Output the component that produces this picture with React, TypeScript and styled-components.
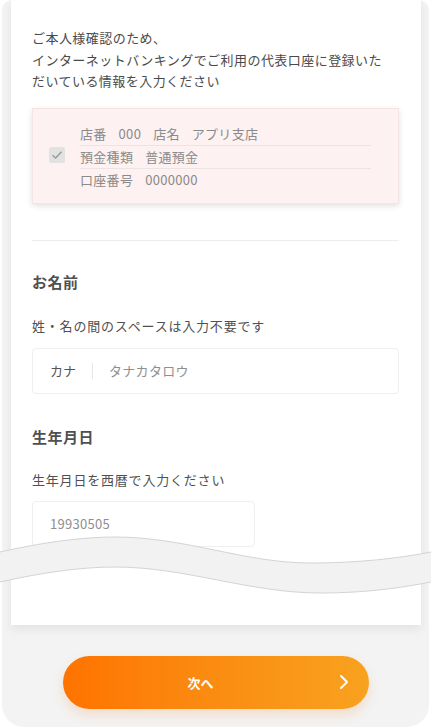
import styled, { createGlobalStyle } from "styled-components"

const GlobalStyle = createGlobalStyle`
  html, body {
    margin: 0;
    padding: 0;
    background: #ffffff;
  }
  body {
    font-family: "Noto Sans CJK JP", "Noto Sans", sans-serif;
    color: #555;
  }
`

const Frame = styled.div`
  position: relative;
  margin: 0 2px;
  height: 727px;
  background: #f3f3f3;
  border-radius: 10px 10px 22px 22px;
  display: flex;
  flex-direction: column;
  align-items: flex-start;
`

const Card = styled.div`
  position: relative;
  margin-left: 9px;
  width: 410px;
  height: 625px;
  box-sizing: border-box;
  padding: 27px 22px 0 21px;
  background: #fff;
  box-shadow: 0 4px 10px rgba(0, 0, 0, 0.07);
  display: flex;
  flex-direction: column;
`

const Intro = styled.p`
  margin: 0;
  font-size: 13px;
  line-height: 21.5px;
  letter-spacing: 0.45px;
  color: #4a4a4a;
`

const InfoBox = styled.div`
  margin-top: 16px;
  height: 96px;
  box-sizing: border-box;
  padding: 14px 27px 0 16px;
  background: #fdf1f1;
  border: 1px solid #f6e4e4;
  box-shadow: 0 2px 6px rgba(0, 0, 0, 0.12);
  display: flex;
  align-items: flex-start;
  gap: 15px;
`

const Check = styled.div`
  margin-top: 24px;
  width: 16px;
  height: 16px;
  border-radius: 2px;
  background: #e2e2e2;
  display: flex;
  align-items: center;
  justify-content: center;
  flex-shrink: 0;
`

const Rows = styled.div`
  flex: 1;
  display: flex;
  flex-direction: column;
`

const InfoRow = styled.div<{ $line?: boolean }>`
  height: 23px;
  box-sizing: border-box;
  display: flex;
  align-items: center;
  gap: 12px;
  font-size: 13px;
  color: #8a8a8a;
  border-bottom: 1px solid ${(p) => (p.$line ? "#ece3e3" : "transparent")};
  letter-spacing: 0.3px;
`

const Divider = styled.div`
  margin-top: 36px;
  height: 1px;
  background: #ededed;
`

const Heading = styled.h2<{ $top: number }>`
  margin: ${(p) => p.$top}px 0 0;
  font-size: 15px;
  line-height: 22px;
  font-weight: 700;
  letter-spacing: 0.5px;
  color: #505050;
`

const Hint = styled.p<{ $top: number }>`
  margin: ${(p) => p.$top}px 0 0;
  font-size: 13px;
  line-height: 20px;
  letter-spacing: 0.8px;
  color: #505050;
`

const Field = styled.div<{ $width: number; $top: number }>`
  margin-top: ${(p) => p.$top}px;
  width: ${(p) => p.$width}px;
  height: 46px;
  box-sizing: border-box;
  border: 1px solid #efefef;
  border-radius: 4px;
  display: flex;
  align-items: center;
  padding-left: 17px;
  font-size: 13px;
  flex-shrink: 0;
`

const FieldLabel = styled.span`
  color: #555;
  padding-right: 16px;
  border-right: 1px solid #e6e6e6;
  line-height: 16px;
`

const FieldValue = styled.span<{ $pad?: number }>`
  color: #8f8f8f;
  padding-left: ${(p) => p.$pad ?? 0}px;
  letter-spacing: 0.3px;
`

const Wave = styled.svg`
  position: absolute;
  left: -11px;
  top: 530px;
  width: 431px;
  height: 70px;
`

const Footer = styled.div`
  flex: 1;
  width: 100%;
  display: flex;
  align-items: center;
  justify-content: center;
  padding-top: 12px;
`

const NextButton = styled.button`
  width: 306px;
  height: 53px;
  border: none;
  border-radius: 27px;
  background: linear-gradient(90deg, #ff7300 0%, #fb8a10 45%, #f8a21f 100%);
  box-shadow: 0 6px 12px rgba(240, 120, 20, 0.18);
  color: #fff;
  font-family: "Noto Sans CJK JP", sans-serif;
  font-size: 13px;
  font-weight: 700;
  display: flex;
  align-items: center;
  padding: 0 20px 0 0;
`

const ButtonLabel = styled.span`
  flex: 1;
  text-align: center;
`

export default function App() {
  return (
    <>
      <GlobalStyle />
      <Frame>
        <Card>
          <Intro>
            ご本人様確認のため、
            <br />
            インターネットバンキングでご利用の代表口座に登録いた
            <br />
            だいている情報を入力ください
          </Intro>
          <InfoBox>
            <Check>
              <svg width="12" height="10" viewBox="0 0 12 10">
                <path d="M1.5 5.2 L4.6 8 L10.5 1.8" fill="none" stroke="#9a9a9a" strokeWidth="1.4" />
              </svg>
            </Check>
            <Rows>
              <InfoRow $line>
                <span>店番</span>
                <span>000</span>
                <span>店名</span>
                <span>アプリ支店</span>
              </InfoRow>
              <InfoRow $line>
                <span>預金種類</span>
                <span>普通預金</span>
              </InfoRow>
              <InfoRow>
                <span>口座番号</span>
                <span>0000000</span>
              </InfoRow>
            </Rows>
          </InfoBox>
          <Divider />
          <Heading $top={30}>お名前</Heading>
          <Hint $top={23}>姓・名の間のスペースは入力不要です</Hint>
          <Field $width={367} $top={12}>
            <FieldLabel>カナ</FieldLabel>
            <FieldValue $pad={16}>タナカタロウ</FieldValue>
          </Field>
          <Heading $top={32}>生年月日</Heading>
          <Hint $top={22}>生年月日を西暦で入力ください</Hint>
          <Field $width={223} $top={11}>
            <FieldValue>19930505</FieldValue>
          </Field>
          <Wave viewBox="0 0 431 70">
            <path
              d="M0 22 C40 13 80 7 115 7 C185 7 245 33 310 33 C360 33 400 28 431 22 L431 52 C400 58 365 63 320 63 C250 63 185 37 115 37 C80 37 40 43 0 52 Z"
              fill="#f2f2f2"
            />
            <path
              d="M0 22 C40 13 80 7 115 7 C185 7 245 33 310 33 C360 33 400 28 431 22"
              fill="none"
              stroke="#d4d4d4"
              strokeWidth="1"
            />
            <path
              d="M0 52 C40 43 80 37 115 37 C185 37 250 63 320 63 C365 63 400 58 431 52"
              fill="none"
              stroke="#d4d4d4"
              strokeWidth="1"
            />
          </Wave>
        </Card>
        <Footer>
          <NextButton>
            <ButtonLabel>次へ</ButtonLabel>
            <svg width="10" height="16" viewBox="0 0 10 16">
              <path d="M2 2 L8 8 L2 14" fill="none" stroke="#fff" strokeWidth="2" strokeLinecap="round" strokeLinejoin="round" />
            </svg>
          </NextButton>
        </Footer>
      </Frame>
    </>
  )
}
